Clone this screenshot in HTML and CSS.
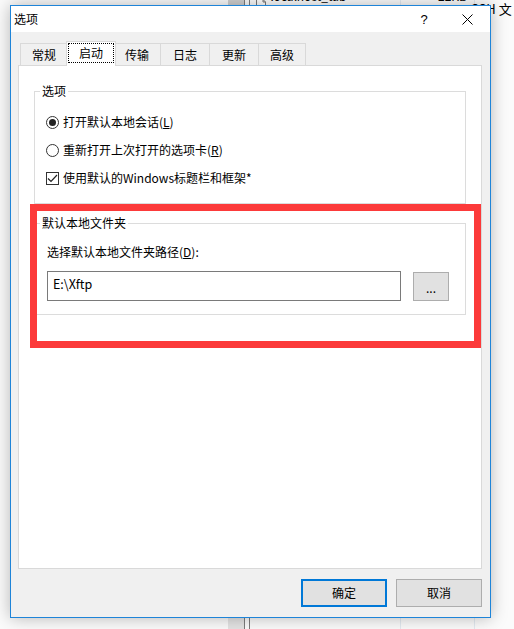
FILE: index.html
```html
<!DOCTYPE html>
<html lang="zh-CN">
<head>
<meta charset="utf-8">
<title>选项</title>
<link rel="stylesheet" href="styles.css">
</head>
<body>
<div class="desk">
  <div class="backdrop">
    <div class="bd-block bd-block-top"></div>
    <div class="bd-block bd-block-bottom"></div>
    <div class="bd-line bd-line-a"></div>
    <div class="bd-line bd-line-b"></div>
    <div class="bd-sep bd-sep-a"></div>
    <div class="bd-sep bd-sep-b"></div>
    <svg class="bd-doc" width="12" height="8" viewBox="0 0 12 8"><path d="M1.5 0.5 H8 L10.5 3 V8 M1.5 0.5 V8 M8 0.5 V3 H10.5" fill="#fff" stroke="#777" stroke-width="1"/></svg>
    <span class="bd-text bd-text-a">localhost_tab</span>
    <span class="bd-text bd-text-b">22KB</span>
    <span class="bd-text bd-text-c">SSH 文</span>
  </div>

  <div class="dialog">
    <div class="titlebar">
      <span class="title">选项</span>
      <span class="caption-btns">
        <span class="help">?</span>
        <span class="close"><svg width="11" height="11" viewBox="0 0 11 11"><path d="M0.5 0.5 L10.5 10.5 M10.5 0.5 L0.5 10.5" stroke="#000" stroke-width="1" fill="none"/></svg></span>
      </span>
    </div>

    <div class="client">
      <div class="tabs">
        <span class="tab">常规</span>
        <span class="tab tab-active"><span class="focus">启动</span></span>
        <span class="tab">传输</span>
        <span class="tab tab-wide">日志</span>
        <span class="tab tab-wide">更新</span>
        <span class="tab">高级</span>
      </div>

      <div class="panel">
        <fieldset class="group group-options">
          <legend>选项</legend>
          <label class="opt"><span class="radio radio-on"></span>打开默认本地会话(<u>L</u>)</label>
          <label class="opt"><span class="radio"></span>重新打开上次打开的选项卡(<u>R</u>)</label>
          <label class="opt"><span class="check"><svg width="11" height="11" viewBox="0 0 11 11"><path d="M1 5.5 L4 8.5 L10 2" stroke="#222" stroke-width="1.2" fill="none"/></svg></span>使用默认的Windows标题栏和框架*</label>
        </fieldset>

        <fieldset class="group group-folder">
          <legend>默认本地文件夹</legend>
          <div class="field-label">选择默认本地文件夹路径(<u>D</u>):</div>
          <div class="path-row">
            <div class="textbox">E:\Xftp</div>
            <div class="browse">...</div>
          </div>
        </fieldset>

        <div class="highlight"></div>
      </div>

      <div class="buttons">
        <div class="btn btn-default">确定</div>
        <div class="btn">取消</div>
      </div>
    </div>
  </div>
</div>
</body>
</html>
```

FILE: styles.css
```css
* { box-sizing: border-box; }

html, body {
  margin: 0;
  padding: 0;
}

body {
  width: 514px;
  height: 629px;
  overflow: hidden;
  background: #ffffff;
  font-family: "Noto Sans CJK SC", "Noto Sans", sans-serif;
  font-size: 12px;
  color: #000;
}

.desk {
  position: relative;
  width: 514px;
  height: 629px;
}

/* ---------- background application fragments ---------- */
.backdrop {
  position: absolute;
  inset: 0;
  background: #fbfbfb;
}

.bd-block {
  position: absolute;
  left: 228px;
  width: 16px;
}
.bd-block-top { top: 0; height: 6px; background: #cfcfcf; }
.bd-block-bottom { top: 618px; height: 11px; background: #e4e4e4; }

.bd-line {
  position: absolute;
  top: 0;
  bottom: 0;
  width: 1px;
  background: #7d7d7d;
}
.bd-line-a { left: 244px; }
.bd-line-b { left: 249px; }

.bd-sep {
  position: absolute;
  top: 0;
  bottom: 0;
  width: 1px;
  background: #e3eaf1;
}
.bd-sep-a { left: 400px; }
.bd-sep-b { left: 474px; }

.bd-doc {
  position: absolute;
  left: 255px;
  top: -1px;
}

.bd-text {
  position: absolute;
  font-size: 12px;
  line-height: 16px;
  white-space: nowrap;
}
.bd-text-a { left: 270px; top: -12px; }
.bd-text-b { left: 438px; top: -12px; }
.bd-text-c { left: 471px; top: 1px; font-size: 13px; }

/* ---------- dialog window ---------- */
.dialog {
  position: absolute;
  left: 10px;
  top: 5px;
  width: 481px;
  height: 613px;
  border: 1px solid #1e84d8;
  background: #f0f0f0;
  box-shadow: 0 0 16px rgba(0, 0, 0, 0.28);
  display: flex;
  flex-direction: column;
}

.titlebar {
  height: 26px;
  background: #ffffff;
  display: flex;
  align-items: center;
  justify-content: space-between;
  padding-left: 3px;
}

.title {
  font-size: 12px;
  line-height: 16px;
}

.caption-btns {
  display: flex;
  align-items: center;
  height: 100%;
}

.help {
  width: 40px;
  text-align: center;
  font-family: "Liberation Sans", sans-serif;
  font-size: 13px;
  margin-right: 0;
  padding-top: 1px;
}

.close {
  width: 46px;
  height: 100%;
  display: flex;
  align-items: center;
  justify-content: center;
  padding-top: 1px;
}

.client {
  flex: 1;
  display: flex;
  flex-direction: column;
  padding: 9px 8px 10px 7px;
}

/* ---------- tabs ---------- */
.tabs {
  display: flex;
  align-items: flex-end;
  padding-left: 2px;
  height: 24px;
  position: relative;
  z-index: 1;
}

.tab {
  height: 22px;
  border: 1px solid #d9d9d9;
  border-bottom: none;
  margin-left: -1px;
  padding: 0 11px;
  line-height: 22px;
  background: #f0f0f0;
  white-space: nowrap;
}
.tab:first-child { margin-left: 0; }
.tab-wide { padding: 0 12px; }

.tab-active {
  height: 25px;
  margin: 0 -2px -1px -2px;
  padding: 1px 1px 0 1px;
  background: #ffffff;
  line-height: 18px;
  position: relative;
  z-index: 2;
}

.focus {
  display: inline-block;
  border: 1px dotted #000;
  padding: 0 10px;
  height: 20px;
  line-height: 18px;
}

/* ---------- panel ---------- */
.panel {
  flex: 1;
  background: #ffffff;
  border: 1px solid #d9d9d9;
  position: relative;
  padding: 17px 15px 0 15px;
}

.group {
  margin: 0;
  border: 1px solid #dcdcdc;
  padding: 0 10px 0 11px;
  min-width: 0;
}

.group legend {
  padding: 0 2px;
  margin-left: -6px;
  line-height: 16px;
  height: 16px;
}

.group-options {
  padding-top: 9px;
  padding-bottom: 11px;
}

.opt {
  display: flex;
  align-items: center;
  height: 28px;
  line-height: 16px;
}

.radio {
  width: 13px;
  height: 13px;
  border: 1px solid #333;
  border-radius: 50%;
  margin-right: 4px;
  display: flex;
  align-items: center;
  justify-content: center;
  background: #fff;
}

.radio-on::after {
  content: "";
  width: 7px;
  height: 7px;
  border-radius: 50%;
  background: #222;
}

.check {
  width: 13px;
  height: 13px;
  border: 1px solid #333;
  margin-right: 4px;
  display: flex;
  align-items: center;
  justify-content: center;
  background: #fff;
}

.group-folder {
  margin-top: 11px;
  padding: 13px 15px 13px 12px;
}

.group-folder legend {
  margin-left: -7px;
}

.field-label {
  line-height: 16px;
  height: 16px;
}

.path-row {
  display: flex;
  align-items: center;
  margin-top: 11px;
  gap: 12px;
}

.textbox {
  width: 354px;
  height: 30px;
  border: 1px solid #7a7a7a;
  background: #fff;
  padding: 3px 0 0 5px;
  line-height: 18px;
  font-size: 12.5px;
}

.browse {
  width: 36px;
  height: 29px;
  border: 1px solid #adadad;
  background: #e1e1e1;
  text-align: center;
  line-height: 24px;
  font-size: 12px;
  padding-top: 3px;
}

/* red annotation rectangle lying over the content */
.highlight {
  position: absolute;
  left: 11px;
  top: 138px;
  width: 451px;
  height: 144px;
  border: 7px solid #fc3a3a;
  pointer-events: none;
}

/* ---------- buttons ---------- */
.buttons {
  display: flex;
  justify-content: flex-end;
  gap: 9px;
  margin-top: 10px;
}

.btn {
  width: 86px;
  height: 28px;
  border: 1px solid #adadad;
  background: #e1e1e1;
  display: flex;
  align-items: center;
  justify-content: center;
  line-height: 16px;
}

.btn-default {
  border: 2px solid #0078d7;
}
```
